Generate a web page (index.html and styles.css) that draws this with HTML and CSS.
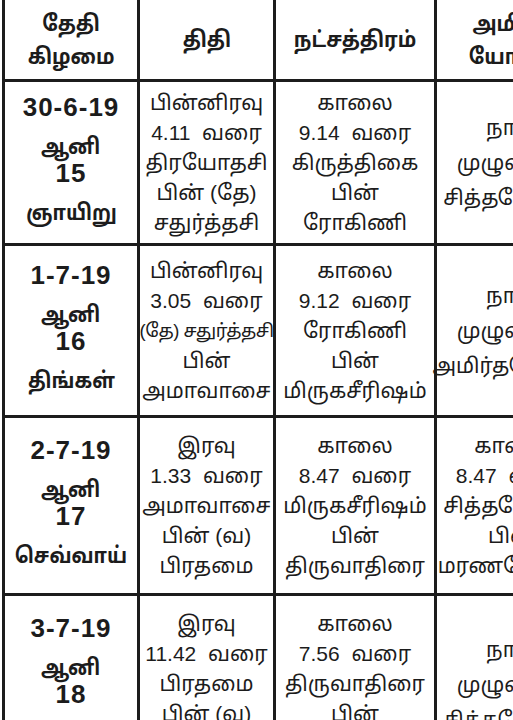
FILE: index.html
```html
<!DOCTYPE html>
<html lang="ta">
<head>
<meta charset="utf-8">
<title>பஞ்சாங்கம்</title>
<link rel="stylesheet" href="styles.css">
</head>
<body>
<div class="sheet">
  <div class="cell head"><span>தேதி</span><span>கிழமை</span></div>
  <div class="cell head"><span>திதி</span></div>
  <div class="cell head"><span>நட்சத்திரம்</span></div>
  <div class="cell head"><span>அமிர்த</span><span>யோகம்</span></div>

  <div class="cell date"><span class="num">30-6-19</span><span class="ta">ஆனி</span><span class="num">15</span><span class="ta">ஞாயிறு</span></div>
  <div class="cell"><span>பின்னிரவு</span><span>4.11&nbsp; வரை</span><span>திரயோதசி</span><span>பின் (தே)</span><span>சதுர்த்தசி</span></div>
  <div class="cell"><span>காலை</span><span>9.14&nbsp; வரை</span><span>கிருத்திகை</span><span>பின்</span><span>ரோகிணி</span></div>
  <div class="cell wide"><span>நாள்</span><span>முழுவதும்</span><span>சித்தயோகம்</span></div>

  <div class="cell date"><span class="num">1-7-19</span><span class="ta">ஆனி</span><span class="num">16</span><span class="ta">திங்கள்</span></div>
  <div class="cell"><span>பின்னிரவு</span><span>3.05&nbsp; வரை</span><span class="tight">(தே) சதுர்த்தசி</span><span>பின்</span><span>அமாவாசை</span></div>
  <div class="cell"><span>காலை</span><span>9.12&nbsp; வரை</span><span>ரோகிணி</span><span>பின்</span><span>மிருகசீரிஷம்</span></div>
  <div class="cell wide"><span>நாள்</span><span>முழுவதும்</span><span>அமிர்தயோகம்</span></div>

  <div class="cell date"><span class="num">2-7-19</span><span class="ta">ஆனி</span><span class="num">17</span><span class="ta">செவ்வாய்</span></div>
  <div class="cell"><span>இரவு</span><span>1.33&nbsp; வரை</span><span>அமாவாசை</span><span>பின் (வ)</span><span>பிரதமை</span></div>
  <div class="cell"><span>காலை</span><span>8.47&nbsp; வரை</span><span>மிருகசீரிஷம்</span><span>பின்</span><span>திருவாதிரை</span></div>
  <div class="cell"><span>காலை</span><span>8.47&nbsp; வரை</span><span>சித்தயோகம்</span><span>பின்</span><span>மரணயோகம்</span></div>

  <div class="cell date"><span class="num">3-7-19</span><span class="ta">ஆனி</span><span class="num">18</span><span class="ta">புதன்</span></div>
  <div class="cell"><span>இரவு</span><span>11.42&nbsp; வரை</span><span>பிரதமை</span><span>பின் (வ)</span><span>துவிதியை</span></div>
  <div class="cell"><span>காலை</span><span>7.56&nbsp; வரை</span><span>திருவாதிரை</span><span>பின்</span><span>புனர்பூசம்</span></div>
  <div class="cell wide"><span>நாள்</span><span>முழுவதும்</span><span>சித்தயோகம்</span></div>
</div>
</body>
</html>
```

FILE: styles.css
```css
html, body {
  margin: 0;
  padding: 0;
  background: #ffffff;
  overflow: hidden;
  width: 513px;
  height: 720px;
}

.sheet {
  display: grid;
  grid-template-columns: 132px 133px 158px 150px;
  grid-template-rows: 79px 161px 169px 175px 176px;
  gap: 3px;
  padding: 3px;
  margin: -3px 0 0 2px;
  background: #1c1c1c;
  width: max-content;
  font-family: "Liberation Sans", "Noto Sans Tamil", "Lohit Tamil", sans-serif;
  color: #1c1c1c;
}

.cell {
  background: #ffffff;
  display: flex;
  flex-direction: column;
  align-items: center;
  justify-content: center;
  text-align: center;
  font-size: 21px;
  line-height: 30px;
  white-space: nowrap;
}

.cell span {
  display: inline-block;
}

.cell.wide {
  line-height: 35px;
}

.cell .tight {
  font-size: 18.5px;
  letter-spacing: -0.5px;
}

.cell.head {
  font-weight: 700;
  font-size: 22px;
  line-height: 33px;
}

.cell.head span {
  transform: scaleX(0.9);
}

.cell.date {
  font-weight: 700;
  line-height: 33px;
}

.cell.date .num {
  font-size: 26px;
  letter-spacing: 1px;
  line-height: 21px;
  padding-bottom: 12px;
}

.cell.date .ta {
  font-size: 22px;
  transform: scaleX(0.88);
}
```
